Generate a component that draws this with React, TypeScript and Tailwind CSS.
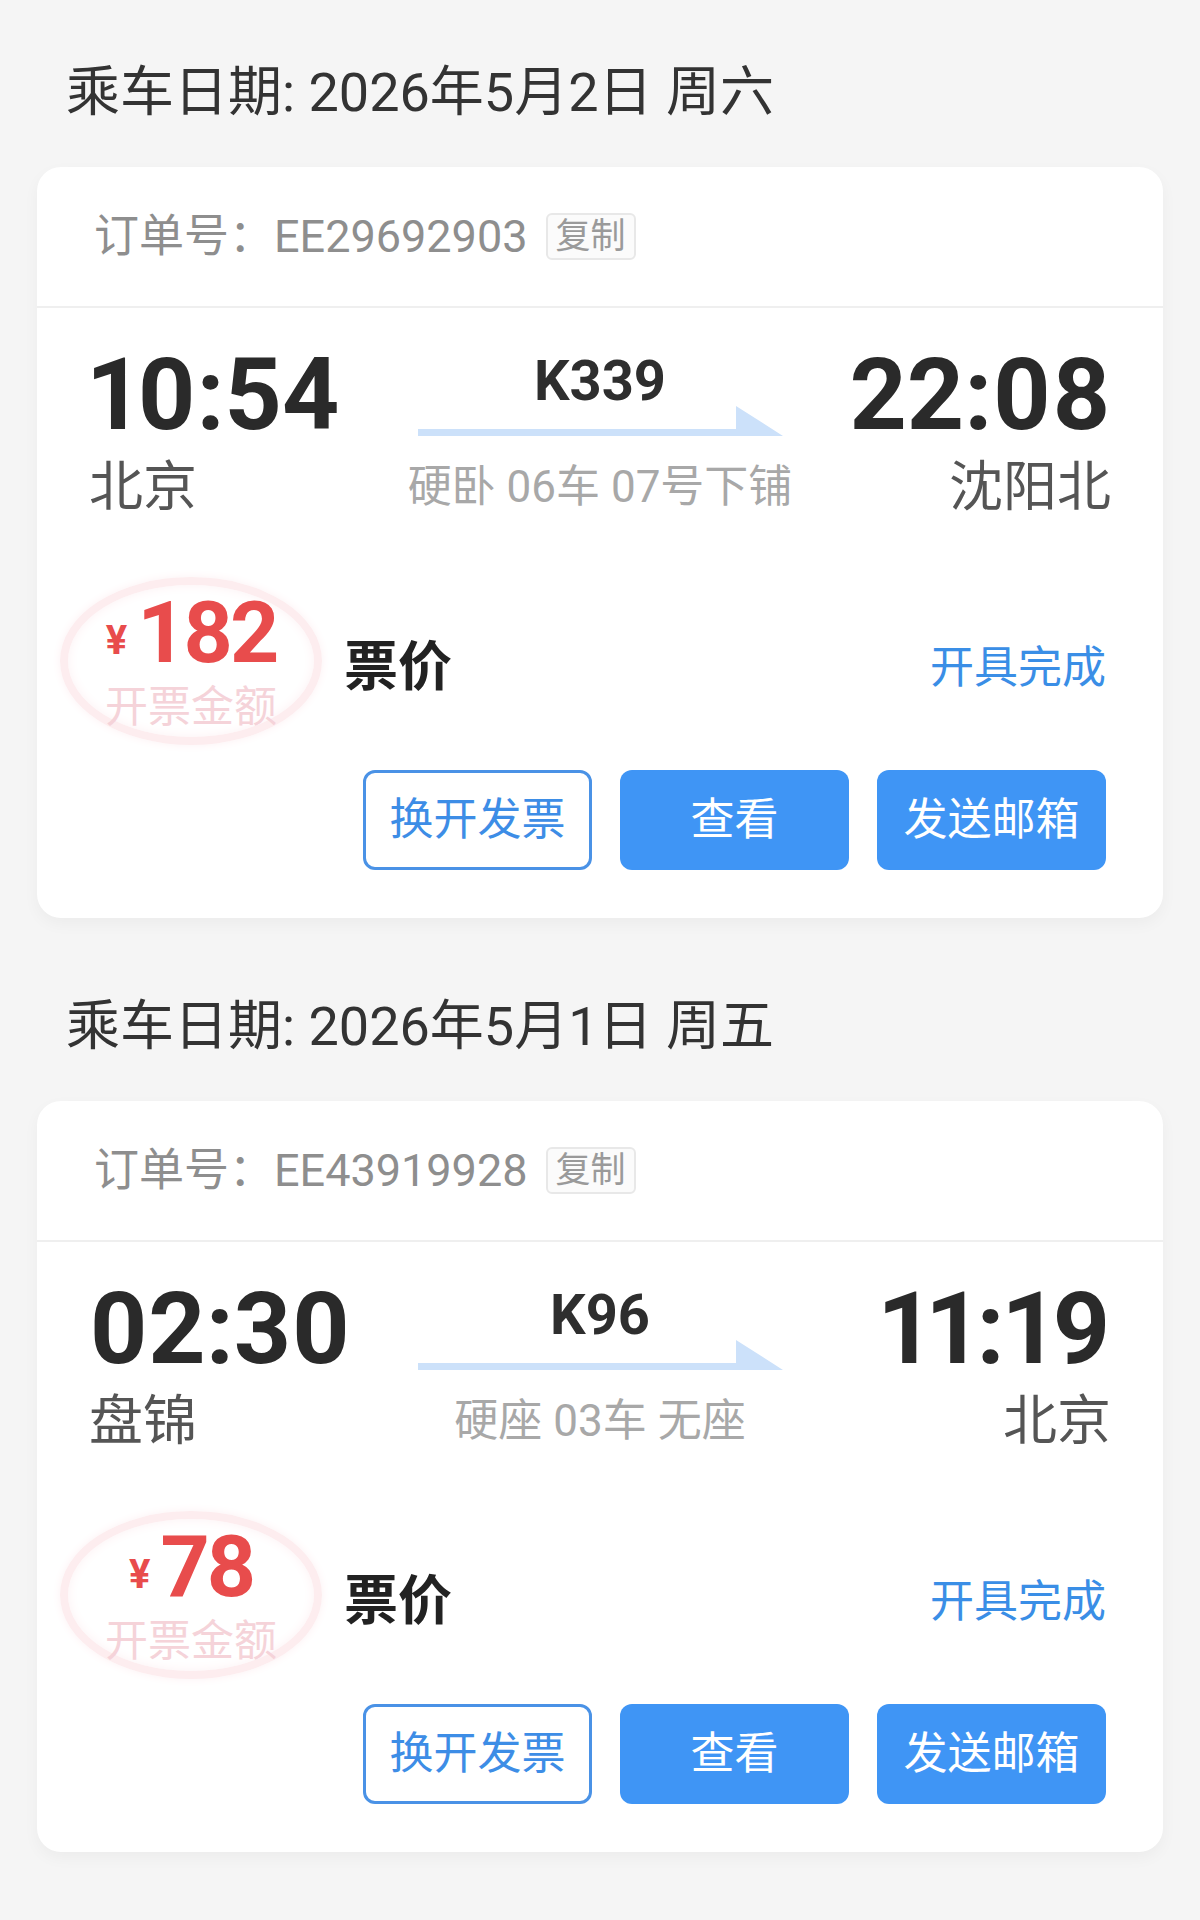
import React from 'react';

type Ticket = {
  date: string;
  orderNo: string;
  depTime: string;
  depStation: string;
  arrTime: string;
  arrStation: string;
  train: string;
  seat: string;
  price: string;
};

const tickets: Ticket[] = [
  {
    date: '乘车日期: 2026年5月2日 周六',
    orderNo: 'EE29692903',
    depTime: '10:54',
    depStation: '北京',
    arrTime: '22:08',
    arrStation: '沈阳北',
    train: 'K339',
    seat: '硬卧 06车 07号下铺',
    price: '182',
  },
  {
    date: '乘车日期: 2026年5月1日 周五',
    orderNo: 'EE43919928',
    depTime: '02:30',
    depStation: '盘锦',
    arrTime: '11:19',
    arrStation: '北京',
    train: 'K96',
    seat: '硬座 03车 无座',
    price: '78',
  },
];

const Arrow = () => (
  <svg width="365" height="30" viewBox="0 0 365 30" className="block">
    <polygon points="0,23 318,23 318,0 365,30 0,30" fill="#cce1fa" />
  </svg>
);

const TicketCard = ({ t }: { t: Ticket }) => {
  return (
    <div className="bg-white rounded-[24px] shadow-[0_6px_16px_rgba(0,0,0,0.04)]">
      {/* order number */}
      <div className="h-[141px] pl-[57px] flex items-center border-b-2 border-[#efefef]">
        <p className="text-[45px] leading-[45px] text-[#8e8e8e]">订单号：{t.orderNo}</p>
        <span className="ml-[18px] w-[90px] h-[47px] flex items-center justify-center rounded-[6px] border-2 border-[#e8e8e8] bg-[#fbfbfb] text-[35px] leading-[35px] text-[#9a9a9a]">
          复制
        </span>
      </div>

      <div className="px-[52px] pt-[37px] pb-[48px]">
        {/* route */}
        <div className="grid grid-cols-[1fr_auto_1fr]">
          <div className="flex flex-col items-start">
            <p className="text-[100px] leading-[100px] font-bold text-[#2a2a2a] proportional-nums">{t.depTime}</p>
            <p className="mt-[16px] text-[54px] leading-[54px] text-[#555]">{t.depStation}</p>
          </div>
          <div className="flex flex-col items-center pt-[11px]">
            <p className="text-[56px] leading-[50px] font-bold text-[#2e2e2e]">{t.train}</p>
            <Arrow />
            <p className="mt-[29px] text-[44px] leading-[44px] text-[#a8a8a8] whitespace-nowrap">{t.seat}</p>
          </div>
          <div className="flex flex-col items-end">
            <p className="text-[100px] leading-[100px] font-bold text-[#2a2a2a] proportional-nums">{t.arrTime}</p>
            <p className="mt-[16px] text-[54px] leading-[54px] text-[#555]">{t.arrStation}</p>
          </div>
        </div>

        {/* price */}
        <div className="mt-[62px] flex items-center">
          <div className="-ml-[29px] w-[262px] h-[168px] rounded-[50%] border-[8px] border-[#fdedef] shadow-[inset_0_0_12px_#fdf1f3,0_0_10px_#fdf1f3] flex flex-col items-center justify-center">
            <p className="text-[86px] leading-[78px] text-[#e84c4c] font-bold whitespace-nowrap">
              <span className="text-[40px] align-[8px] mr-[10px]">¥</span>
              <span className="tracking-[-3px]">{t.price}</span>
            </p>
            <p className="mt-[6px] text-[43px] leading-[43px] text-[#f5d3d9]">开票金额</p>
          </div>
          <p className="ml-[22px] mt-[14px] text-[54px] leading-[54px] font-bold text-[#222]">票价</p>
          <p className="ml-auto mt-[14px] pr-[5px] text-[44px] leading-[44px] text-[#3a8ee6]">开具完成</p>
        </div>

        {/* actions */}
        <div className="mt-[25px] pr-[5px] flex justify-end gap-[28px]">
          <button className="w-[229px] h-[100px] rounded-[12px] border-[3px] border-[#4a92e6] bg-white text-[44px] text-[#3d8de6]">
            换开发票
          </button>
          <button className="w-[229px] h-[100px] rounded-[12px] bg-[#3f95f5] text-[44px] text-white">
            查看
          </button>
          <button className="w-[229px] h-[100px] rounded-[12px] bg-[#3f95f5] text-[44px] text-white">
            发送邮箱
          </button>
        </div>
      </div>
    </div>
  );
};

export default function App() {
  return (
    <div className="min-h-[1920px] bg-[#f5f5f5] px-[37px] pt-[66px] font-['Roboto','Noto_Sans_CJK_SC',sans-serif]">
      {tickets.map((t, i) => (
        <section key={t.orderNo} className={i === 0 ? '' : 'mt-[82px]'}>
          <h2 className="mb-[47px] pl-[29px] text-[54px] leading-[54px] text-[#333]">{t.date}</h2>
          <TicketCard t={t} />
        </section>
      ))}
    </div>
  );
}
